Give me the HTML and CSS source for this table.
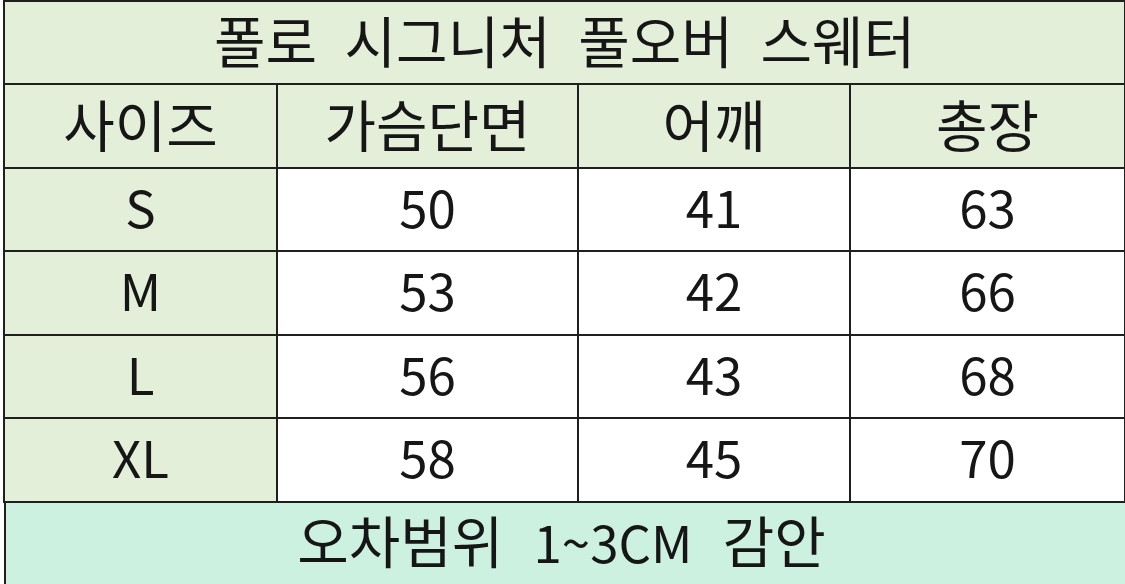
FILE: index.html
```
<!DOCTYPE html>
<html lang="ko">
<head>
<meta charset="utf-8">
<link rel="stylesheet" href="styles.css">
</head>
<body>
<div class="sheet">
<table class="size-table">
  <colgroup>
    <col class="c1"><col class="c2"><col class="c3"><col class="c4">
  </colgroup>
  <tr class="r-a"><td class="title ko" colspan="4">폴로 시그니처 풀오버 스웨터</td></tr>
  <tr class="r-b head ko"><td>사이즈</td><td>가슴단면</td><td>어깨</td><td>총장</td></tr>
  <tr class="r-a"><td class="size">S</td><td>50</td><td>41</td><td>63</td></tr>
  <tr class="r-b"><td class="size">M</td><td>53</td><td>42</td><td>66</td></tr>
  <tr class="r-a"><td class="size">L</td><td>56</td><td>43</td><td>68</td></tr>
  <tr class="r-b"><td class="size">XL</td><td>58</td><td>45</td><td>70</td></tr>
</table>
<div class="note"><span class="ko">오차범위</span> <span class="lat">1~3CM</span> <span class="ko">감안</span></div>
</div>
</body>
</html>
```

FILE: styles.css
```
html, body {
  margin: 0;
  padding: 0;
  background: #ffffff;
}
.sheet {
  width: 1125px;
  height: 584px;
  overflow: hidden;
  padding-left: 3px;
  box-sizing: border-box;
  font-family: "Noto Sans CJK KR", "Noto Sans", sans-serif;
  color: #161616;
}
.size-table {
  border-collapse: collapse;
  table-layout: fixed;
  width: 1121px;
}
.c1 { width: 273px; }
.c2 { width: 301px; }
.c3 { width: 272px; }
.c4 { width: 275px; }
.size-table td {
  border: 2px solid #1f1f1f;
  text-align: center;
  vertical-align: middle;
  font-size: 51px;
  line-height: 1.2;
  padding: 0 0 6px 0;
  background: #ffffff;
}
.size-table .ko td,
.size-table td.ko,
.ko {
  font-size: 56px;
}
.r-a { height: 83px; }
.r-b { height: 84px; }
.size-table td.title {
  background: #e3efd9;
  word-spacing: 12px;
  padding-bottom: 8px;
}
.head td { background: #e3efd9; }
.size-table td.size { background: #e3efd9; }
.note {
  margin-left: 1px;
  border-left: 2px solid #1f1f1f;
  background: #ccf1e1;
  height: 84px;
  font-size: 51px;
  line-height: 72px;
  word-spacing: 16px;
  text-align: center;
  white-space: nowrap;
  padding-right: 8px;
  box-sizing: border-box;
}
```
